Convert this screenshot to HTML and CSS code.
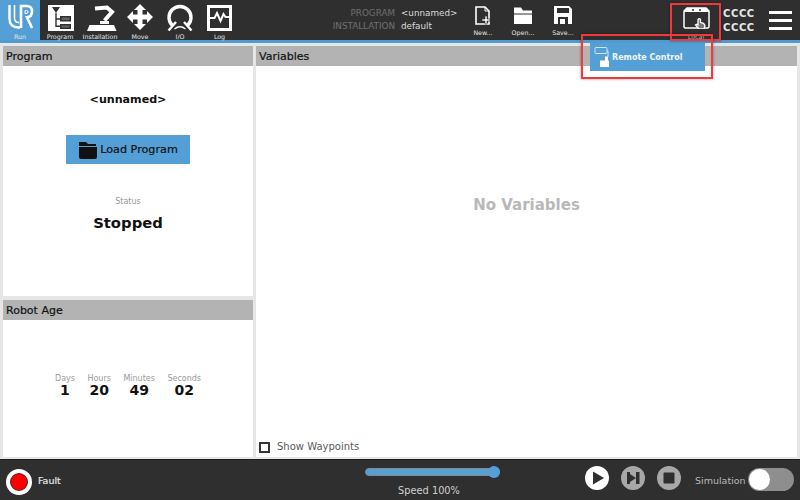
FILE: index.html
```html
<!DOCTYPE html>
<html lang="en">
<head>
<meta charset="utf-8">
<title>PolyScope Run</title>
<link rel="stylesheet" href="styles.css">
</head>
<body>
<div class="app">
  <header class="topbar">
    <nav class="tabs">
      <div class="tab tab-run">
        <svg class="tab-icon" viewBox="0 0 40 34"><g fill="none" stroke="#fff"><path d="M9.500 5V18.500Q9.500 27.500 18.500 27.500H20" stroke-width="2.400"/><path d="M14.500 5V18Q14.500 22.500 19 22.500" stroke-width="1.600"/><path d="M21 28V6H26.500Q32 6 32 11.500Q32 17 27 17.200L32 28" stroke-width="2.600"/><path d="M25 10.500H26.500Q28 10.500 28 12Q28 13.500 26 13.500H25Z" stroke-width="1"/></g></svg>
        <span class="tab-label">Run</span>
      </div>
      <div class="tab">
        <svg class="tab-icon" viewBox="0 0 40 34"><path d="M8 5h26v26H8z" fill="#fff"/><path d="M12 7h8l-4 6zM15.300 13h1.400v14h-1.400zM16 18.300h4v1.400h-4zM16 25.500h4v1.400h-4zM20 16h11v5.500H20zM20 24h11v5H20z" fill="#2f2f2f"/><path d="M21.500 17.500h8v2.500h-8zM21.500 25.500h8v2h-8z" fill="#fff" opacity=".25"/></svg>
        <span class="tab-label">Program</span>
      </div>
      <div class="tab">
        <svg class="tab-icon" viewBox="0 0 40 34"><path d="M15 8.500L27 7.500L32 12L24.500 20.500" fill="none" stroke="#fff" stroke-width="4"/><path d="M20 21h9v3h-9zM9.500 25H34l2.500 6H7z" fill="#fff"/></svg>
        <span class="tab-label">Installation</span>
      </div>
      <div class="tab">
        <svg class="tab-icon" viewBox="0 0 40 34"><path d="M20 4L26 10H22.500V14.500H27V11L33 17L27 23V19.500H22.500V24H26L20 30L14 24H17.500V19.500H13V23L7 17L13 11V14.500H17.500V10H14Z" fill="#fff"/></svg>
        <span class="tab-label">Move</span>
      </div>
      <div class="tab">
        <svg class="tab-icon" viewBox="0 0 40 34"><path d="M12.500 25.500A11 11 0 1 1 27.500 25.500" fill="none" stroke="#fff" stroke-width="3.400"/><path d="M8.500 30.500L16 22M31.500 30.500L24 22" fill="none" stroke="#fff" stroke-width="2.400"/><path d="M14.500 29Q20 24.500 25.500 29" fill="none" stroke="#fff" stroke-width="1.600"/></svg>
        <span class="tab-label">I/O</span>
      </div>
      <div class="tab tab-log">
        <svg class="tab-icon" viewBox="0 0 40 34"><path d="M8.500 6.500h22v23h-22z" fill="none" stroke="#fff" stroke-width="3"/><path d="M10 18h4.500l2.500-5 3.500 8 3-7 2 3H30" fill="none" stroke="#fff" stroke-width="2"/></svg>
        <span class="tab-label">Log</span>
      </div>
    </nav>
    <div class="fileinfo">
      <div class="fileinfo-keys"><span>PROGRAM</span><span>INSTALLATION</span></div>
      <div class="fileinfo-values"><span>&lt;unnamed&gt;</span><span>default</span></div>
    </div>
    <div class="filebtns">
      <div class="filebtn">
        <svg width="16" height="19" viewBox="0 0 16 19"><path d="M1 1h9l4 4v13H1z" fill="none" stroke="#fff" stroke-width="1.600"/><path d="M10 1v4h4" fill="none" stroke="#fff"/><path d="M7 13h3v-3h2v3h3v2h-3v3h-2v-3H7z" fill="#fff" stroke="#2f2f2f" stroke-width=".6"/></svg>
        <span class="tab-label">New...</span>
      </div>
      <div class="filebtn">
        <svg width="18" height="19" viewBox="0 0 18 19"><path d="M0 1.500h7l2 3h9v3H0z" fill="#fff"/><path d="M0 8.500h18V18H0z" fill="#fff"/></svg>
        <span class="tab-label">Open...</span>
      </div>
      <div class="filebtn">
        <svg width="18" height="19" viewBox="0 0 18 19"><path d="M0 0h15l3 3v15H0z" fill="#fff"/><path d="M3 2h12v5H3zM4 11h10v7H4z" fill="#2f2f2f"/><path d="M6 13h5v5H6z" fill="#fff"/></svg>
        <span class="tab-label">Save...</span>
      </div>
    </div>
    <div class="mode">
      <svg width="27" height="22" viewBox="0 0 27 22"><path d="M4 1h19l3 3v16l-1 1H2l-1-1V4z" fill="none" stroke="#fff" stroke-width="1.500"/><path d="M4 1h19l3 3v1H1V4z" fill="#fff"/><circle cx="10" cy="3" r="1" fill="#2f2f2f"/><circle cx="17" cy="3" r="1" fill="#2f2f2f"/><path d="M15 12.500q1.200-1.800 2.500 0V15.500l3 .8 1.500 2-1 3.700h-5l-3.500-4 1.500-.8 1 .8z" fill="#777" stroke="#fff" stroke-width="1.300"/></svg>
      <span class="tab-label mode-label">Local</span>
    </div>
    <div class="cccc"><span>CCCC</span><span>CCCC</span></div>
    <div class="burger"><i></i><i></i><i></i></div>
  </header>
  <div class="blueline"></div>
  <main class="main">
    <div class="leftcol">
      <section class="panel panel-program">
        <h2 class="panel-head">Program</h2>
        <div class="program-body">
          <div class="program-name">&lt;unnamed&gt;</div>
          <button class="load-btn">
            <svg width="18" height="18" viewBox="0 0 18 18"><path d="M0 1h7l2 2h8v2H0z" fill="#111"/><path d="M0 6h18v10a2 2 0 0 1-2 2H2a2 2 0 0 1-2-2z" fill="#111"/></svg>
            <span>Load Program</span>
          </button>
          <div class="status-label">Status</div>
          <div class="status-value">Stopped</div>
        </div>
      </section>
      <section class="panel panel-age">
        <h2 class="panel-head">Robot Age</h2>
        <div class="age-body">
          <div class="age-cell"><span class="age-label">Days</span><span class="age-value">1</span></div>
          <div class="age-cell"><span class="age-label">Hours</span><span class="age-value">20</span></div>
          <div class="age-cell"><span class="age-label">Minutes</span><span class="age-value">49</span></div>
          <div class="age-cell"><span class="age-label">Seconds</span><span class="age-value">02</span></div>
        </div>
      </section>
    </div>
    <section class="panel panel-vars">
      <h2 class="panel-head">Variables</h2>
      <div class="vars-body">
        <div class="no-vars">No Variables</div>
        <label class="waypoints"><span class="checkbox"></span>Show Waypoints</label>
      </div>
    </section>
  </main>
  <footer class="bottombar">
    <div class="fault">
      <span class="fault-dot"></span>
      <span class="fault-text">Fault</span>
    </div>
    <div class="speed">
      <div class="slider"><div class="slider-fill"></div><div class="slider-knob"></div></div>
      <div class="speed-label">Speed 100%</div>
    </div>
    <div class="controls">
      <svg class="ctrl" width="24" height="24" viewBox="0 0 24 24"><circle cx="12" cy="12" r="12" fill="#fff"/><path d="M8 5.500l11 6.500-11 6.500z" fill="#2f2f2f"/></svg>
      <svg class="ctrl" width="24" height="24" viewBox="0 0 24 24"><circle cx="12" cy="12" r="12" fill="#a8a8a8"/><path d="M6 6l9 6-9 6zM15 6h3.500v12H15z" fill="#2f2f2f"/><path d="M6 6h3v12H6z" fill="#2f2f2f"/></svg>
      <svg class="ctrl" width="24" height="24" viewBox="0 0 24 24"><circle cx="12" cy="12" r="12" fill="#a8a8a8"/><rect x="6.500" y="6.500" width="11" height="11" rx="1" fill="#2f2f2f"/></svg>
    </div>
    <span class="sim-label">Simulation</span>
    <div class="toggle"><div class="toggle-knob"></div></div>
  </footer>
</div>
<div class="popup">
  <svg width="19" height="24" viewBox="0 0 19 24"><rect x="5" y="2.500" width="12" height="6" rx="1" fill="none" stroke="#cfe2f1"/><path d="M17 6h1v6" fill="none" stroke="#cfe2f1"/><path d="M15 11.500h3v4h3V22H10v-6.500h5z" fill="#fff"/></svg>
  <span>Remote Control</span>
</div>
<div class="redbox redbox-mode"></div>
<div class="redbox redbox-popup"></div>
</body>
</html>
```
FILE: styles.css
```css
* { box-sizing: border-box; }
html, body { margin: 0; padding: 0; height: 100%; overflow: hidden; }
body { font-family: "DejaVu Sans", sans-serif; background: #e6e6e6; color: #111; position: relative; }

.app { width: 800px; height: 500px; display: flex; flex-direction: column; }

.topbar { height: 40px; background: #2f2f2f; display: flex; align-items: stretch; flex: none; }
.blueline { height: 3px; background: #4f9bd0; flex: none; }
.tabs { display: flex; width: 320px; flex: none; }
.tab { width: 40px; display: flex; flex-direction: column; align-items: center; justify-content: flex-end; flex: none; position: relative; }
.tab-icon { position: absolute; top: 0; left: 0; width: 40px; height: 34px; }
.tab-run { background: #54a0d6; }
.tab-log { width: 39px; }
.tab-label { font-size: 6.300px; line-height: 7px; color: #e6e6e6; white-space: nowrap; }

.fileinfo { width: 142px; flex: none; display: flex; gap: 6px; padding-top: 7px; font-size: 8.800px; line-height: 12.500px; }
.fileinfo-keys { width: 66px; margin-left: 9px; display: flex; flex-direction: column; align-items: flex-end; color: #6f6f6f; white-space: nowrap; }
.fileinfo-values { display: flex; flex-direction: column; color: #dcdcdc; white-space: nowrap; }

.filebtns { display: flex; width: 120px; flex: none; margin-left: 1px; }
.filebtn { width: 40px; display: flex; flex-direction: column; align-items: center; justify-content: space-between; padding: 6px 0 4px; }

.mode { width: 50px; margin-left: 88px; flex: none; display: flex; flex-direction: column; align-items: center; padding-top: 7px; gap: 4px; }
.mode-label { color: #aaa; }
.cccc { width: 33px; margin-left: 2px; flex: none; display: flex; flex-direction: column; justify-content: center; gap: 2px; padding-top: 2px; font-size: 10px; line-height: 12px; font-weight: 700; color: #e6e6e6; letter-spacing: .6px; }
.burger { width: 23px; margin-left: 13px; flex: none; display: flex; flex-direction: column; justify-content: center; gap: 5px; }
.burger i { display: block; height: 3px; background: #fff; }

.main { flex: 1; min-height: 0; display: flex; gap: 3px; padding: 3px 3px 2px; }
.leftcol { width: 250px; flex: none; display: flex; flex-direction: column; gap: 4px; }
.panel { background: #fff; display: flex; flex-direction: column; min-height: 0; }
.panel-program { height: 250px; }
.panel-age { flex: 1; }
.panel-vars { flex: 1; }
.panel-head { margin: 0; height: 20px; flex: none; background: #b3b3b3; font-size: 11px; font-weight: 400; line-height: 22px; padding-left: 3px; color: #111; -webkit-text-stroke: .2px #111; }

.program-body { display: flex; flex-direction: column; align-items: center; flex: 1; }
.program-name { font-size: 11.100px; font-weight: 700; margin-top: 27px; line-height: 14px; }
.load-btn { margin-top: 28px; width: 124px; height: 29px; background: #54a0d6; border: 0; display: flex; align-items: center; justify-content: center; gap: 3px; padding: 0 0 0 1px; font: inherit; font-size: 11.200px; color: #111; -webkit-text-stroke: .2px #111; }
.status-label { margin-top: 33px; font-size: 8px; line-height: 10px; color: #9a9a9a; }
.status-value { margin-top: 7px; font-size: 14.800px; line-height: 18px; font-weight: 700; }

.age-body { flex: 1; display: flex; justify-content: center; align-items: flex-start; padding-top: 54px; gap: 12.500px; }
.age-cell { display: flex; flex-direction: column; align-items: center; }
.age-label { font-size: 8px; line-height: 9px; color: #9a9a9a; }
.age-value { font-size: 14px; line-height: 14px; font-weight: 700; }

.vars-body { flex: 1; display: flex; flex-direction: column; align-items: center; }
.no-vars { margin-top: 130px; font-size: 15px; line-height: 18px; font-weight: 700; color: #b8b8b8; }
.waypoints { margin-top: auto; align-self: flex-start; margin-left: 3px; margin-bottom: 3px; display: flex; align-items: center; gap: 7px; font-size: 10px; line-height: 14px; color: #5a5a5a; }
.checkbox { width: 11px; height: 11px; border: 2px solid #333; background: #fff; display: block; }

.bottombar { height: 41px; flex: none; background: #2f2f2f; border-top: 1px solid #1f1f1f; display: flex; align-items: center; }
.fault { display: flex; align-items: center; gap: 6px; margin-left: 6px; width: 355px; flex: none; }
.fault-dot { width: 26px; height: 26px; border-radius: 50%; background: #f00; border: 4px solid #fff; box-shadow: inset 0 0 0 1px #2f2f2f; display: block; margin-top: 3px; }
.fault-text { font-size: 9.500px; line-height: 11px; color: #e6e6e6; -webkit-text-stroke: .2px #e6e6e6; }
.speed { width: 135px; flex: none; margin-left: 4px; display: flex; flex-direction: column; align-items: center; height: 100%; padding-top: 8px; }
.slider { width: 135px; height: 8px; background: #777; border-radius: 4px; position: relative; border: 1px solid #8a8a8a; flex: none; }
.slider-fill { height: 100%; background: #54a0d6; border-radius: 3px; margin-right: 6px; }
.slider-knob { position: absolute; right: -1px; top: -3px; width: 12px; height: 12px; border-radius: 50%; background: #54a0d6; }
.speed-label { font-size: 9.800px; line-height: 12px; margin: 9px 7px 0 0; color: #cfcfcf; white-space: nowrap; }
.controls { display: flex; gap: 12px; margin: -5px 0 0 85px; flex: none; }
.ctrl { display: block; }
.sim-label { font-size: 9.500px; color: #b8b8b8; margin-left: 14px; flex: none; width: 50px; white-space: nowrap; }
.toggle { width: 46px; height: 23px; border-radius: 12px; background: #8e8e8e; margin: -1px 0 0 3px; flex: none; position: relative; }
.toggle-knob { position: absolute; left: 1px; top: 1px; width: 21px; height: 21px; border-radius: 50%; background: #fff; }

.popup { position: absolute; left: 590px; top: 43px; width: 115px; height: 28px; background: #54a0d6; display: flex; align-items: center; gap: 3px; font-size: 8px; font-weight: 700; color: #eef5fb; }
.redbox { position: absolute; border: 2px solid #f0393b; box-shadow: 0 0 3px rgba(0,0,0,.35); }
.redbox-mode { left: 670px; top: 3px; width: 51px; height: 38px; }
.redbox-popup { left: 581px; top: 34px; width: 132px; height: 45px; }
```
